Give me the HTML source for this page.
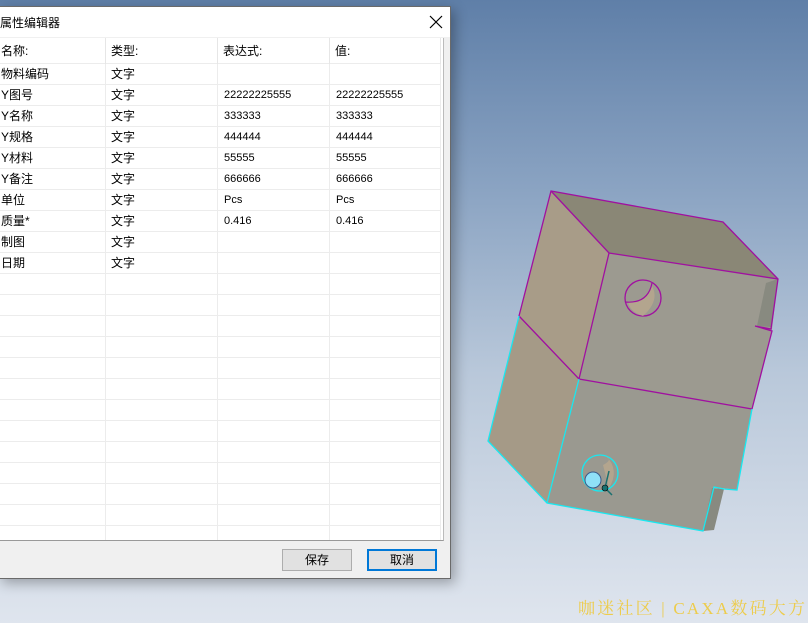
<!DOCTYPE html>
<html><head><meta charset="utf-8"><style>
*{margin:0;padding:0;box-sizing:border-box}
body{width:808px;height:623px;overflow:hidden;position:relative;font-family:"Liberation Sans","Noto Sans CJK SC",sans-serif;font-size:12px;color:#000;
background:linear-gradient(180deg,#5f7fa8 0%,#8aa3c2 30%,#b9c8da 60%,#dfe5ee 100%)}
#dlg{position:absolute;left:-2px;top:6px;width:453px;height:573px;background:#f0f0f0;border:1px solid #6a6a6a;box-shadow:4px 4px 12px rgba(0,0,0,.3)}
#title{position:absolute;left:0;top:0;width:451px;height:30px;background:#fff}
#title span{position:absolute;left:1px;top:7px;font-size:12px}
#close{position:absolute;left:430px;top:8px}
#list{position:absolute;left:0;top:31px;width:445px;height:503px;background:#fff;border-right:1px solid #bbb;border-bottom:1px solid #999;overflow:hidden}
.row{position:absolute;left:0;width:442px;height:21px;border-bottom:1px solid #ececec}
.c{position:absolute;top:0;height:21px;line-height:20px;border-right:1px solid #ececec;padding-left:2px}
.hd .c{border-right:1px solid #e6e6e6}
.n{font-size:11px;font-family:"Liberation Sans",sans-serif}
.btn{position:absolute;top:542px;width:70px;height:22px;background:#e1e1e1;border:1px solid #adadad;text-align:center;line-height:20px}
</style></head><body>
<svg width="808" height="623" style="position:absolute;left:0;top:0">
<polygon points="551,191 723,222 778,279 609,253" fill="#8a8776"/>
<polygon points="551,191 609,253 579,379 519,316" fill="#a89c88"/>
<polygon points="519,316 579,379 547,503 488,441" fill="#a59a87"/>
<polygon points="609,253 778,279 772,329 752,409 579,379" fill="#9c9a90"/>
<polygon points="579,379 752,409 737,490 714,487 703,531 547,503" fill="#9a9990"/>
<polygon points="766,283 778,279 771,327 757,326" fill="#888a80"/>
<polygon points="712,488 724,489 714,530 703,531" fill="#888a80"/>
<g fill="none" stroke="#a010a0" stroke-width="1.3">
<polyline points="519,316 551,191 723,222 778,279 771,329 755,326 772,331 752,409 579,379 519,316"/>
<polyline points="551,191 609,253 778,279"/>
<polyline points="609,253 579,379"/>
<circle cx="643" cy="298" r="18"/>
</g>
<path d="M628,302 Q648,304 651,284 Q661,300 643,316 Q630,312 628,302Z" fill="#b3a58e"/>
<path d="M625,302 Q648,304 652,283" fill="none" stroke="#a010a0" stroke-width="1.2"/>
<path d="M603,465 Q613,460 606,456 Q620,470 609,488Z" fill="#b3a58e"/>
<g fill="none" stroke="#18e8f0" stroke-width="1.3">
<polyline points="519,316 488,441 547,503 703,531 714,487 724,489 737,490 752,409"/>
<polyline points="579,379 547,503"/>
<circle cx="600" cy="473" r="18"/>
</g>
<circle cx="593" cy="480" r="8" fill="#8fe0f8" stroke="#3a5a8a"/>
<line x1="609" y1="471" x2="605" y2="488" stroke="#1a7070" stroke-width="1.5"/>
<line x1="605" y1="488" x2="612" y2="495" stroke="#1a7070" stroke-width="1.5"/>
<circle cx="605" cy="488" r="3" fill="#1a7070" stroke="#000" stroke-width=".6"/>
<text x="578" y="614" font-family="Liberation Serif,'Noto Serif CJK SC',serif" font-size="17" fill="#f0c830" opacity=".85" textLength="227" lengthAdjust="spacing">咖迷社区 | CAXA数码大方</text>
</svg>
<div id="dlg">
<div id="title"><span>属性编辑器</span>
<svg id="close" width="14" height="14"><path d="M1,1L13,13M13,1L1,13" stroke="#000" stroke-width="1.2"/></svg></div>
<div id="list">
<div class="row hd" style="top:0;height:26px"><div class="c" style="left:0;width:107px;height:26px;line-height:26px">名称:</div><div class="c" style="left:107px;width:112px;height:26px;line-height:26px;padding-left:5px">类型:</div><div class="c" style="left:219px;width:112px;height:26px;line-height:26px;padding-left:5px">表达式:</div><div class="c" style="left:331px;width:111px;height:26px;line-height:26px;padding-left:5px">值:</div></div>
</div>
<div class="btn" style="left:283px">保存</div>
<div class="btn" style="left:368px;border:2px solid #0078d7;line-height:18px">取消</div>
</div>
<script>
var d=[["物料编码","文字","",""],["Y图号","文字","22222225555","22222225555"],["Y名称","文字","333333","333333"],["Y规格","文字","444444","444444"],["Y材料","文字","55555","55555"],["Y备注","文字","666666","666666"],["单位","文字","Pcs","Pcs"],["质量*","文字","0.416","0.416"],["制图","文字","",""],["日期","文字","",""]];
var L=document.getElementById('list'),h='';
for(var i=0;i<23;i++){var r=d[i]||["","","",""];var t=26+i*21;
h+='<div class="row" style="top:'+t+'px"><div class="c" style="left:0;width:107px">'+r[0]+'</div><div class="c" style="left:107px;width:112px;padding-left:5px">'+r[1]+'</div><div class="c n" style="left:219px;width:112px;padding-left:6px">'+r[2]+'</div><div class="c n" style="left:331px;width:111px;padding-left:6px">'+r[3]+'</div></div>';}
L.innerHTML+=h;
</script>
</body></html>
